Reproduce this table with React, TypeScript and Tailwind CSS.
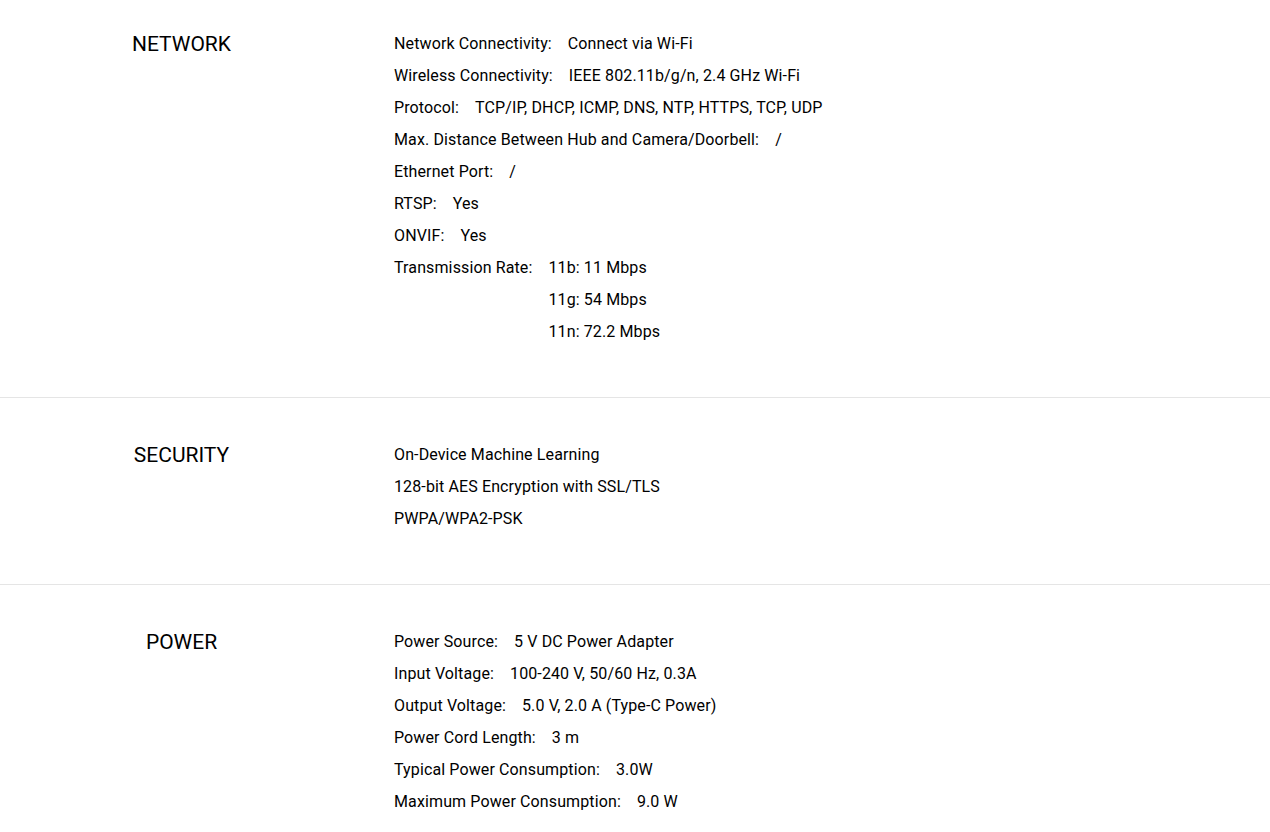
import React from "react";

type Row = { label?: string; values: string[] };
type Section = { title: string; rows: Row[]; first?: boolean };

const SECTIONS: Section[] = [
  {
    title: "NETWORK",
    first: true,
    rows: [
      { label: "Network Connectivity:", values: ["Connect via Wi-Fi"] },
      { label: "Wireless Connectivity:", values: ["IEEE 802.11b/g/n, 2.4 GHz Wi-Fi"] },
      { label: "Protocol:", values: ["TCP/IP, DHCP, ICMP, DNS, NTP, HTTPS, TCP, UDP"] },
      { label: "Max. Distance Between Hub and Camera/Doorbell:", values: ["/"] },
      { label: "Ethernet Port:", values: ["/"] },
      { label: "RTSP:", values: ["Yes"] },
      { label: "ONVIF:", values: ["Yes"] },
      { label: "Transmission Rate:", values: ["11b: 11 Mbps", "11g: 54 Mbps", "11n: 72.2 Mbps"] },
    ],
  },
  {
    title: "SECURITY",
    rows: [
      { values: ["On-Device Machine Learning"] },
      { values: ["128-bit AES Encryption with SSL/TLS"] },
      { values: ["PWPA/WPA2-PSK"] },
    ],
  },
  {
    title: "POWER",
    rows: [
      { label: "Power Source:", values: ["5 V DC Power Adapter"] },
      { label: "Input Voltage:", values: ["100-240 V, 50/60 Hz, 0.3A"] },
      { label: "Output Voltage:", values: ["5.0 V, 2.0 A (Type-C Power)"] },
      { label: "Power Cord Length:", values: ["3 m"] },
      { label: "Typical Power Consumption:", values: ["3.0W"] },
      { label: "Maximum Power Consumption:", values: ["9.0 W"] },
    ],
  },
];

export default function App() {
  return (
    <div className="min-h-screen bg-white text-black" style={{ fontFamily: "Roboto, Inter, sans-serif" }}>
      {SECTIONS.map((s, i) => (
        <section
          key={s.title}
          className={`flex ${s.first ? "pt-[28px]" : "pt-[41px]"} pb-[49px] ${i < SECTIONS.length - 1 ? "border-b border-[#e5e5e5]" : ""}`}
        >
          <h3 className="ml-[83px] w-[197px] shrink-0 text-center text-[21px] leading-8 font-normal">{s.title}</h3>
          <div className="ml-[114px] flex flex-col">
            {s.rows.map((r, j) => (
              <div key={j} className="flex gap-4 text-[16px] leading-8 tracking-[0.12px]">
                {r.label && <span>{r.label}</span>}
                <div className="flex flex-col">
                  {r.values.map((v) => <span key={v}>{v}</span>)}
                </div>
              </div>
            ))}
          </div>
        </section>
      ))}
    </div>
  );
}
